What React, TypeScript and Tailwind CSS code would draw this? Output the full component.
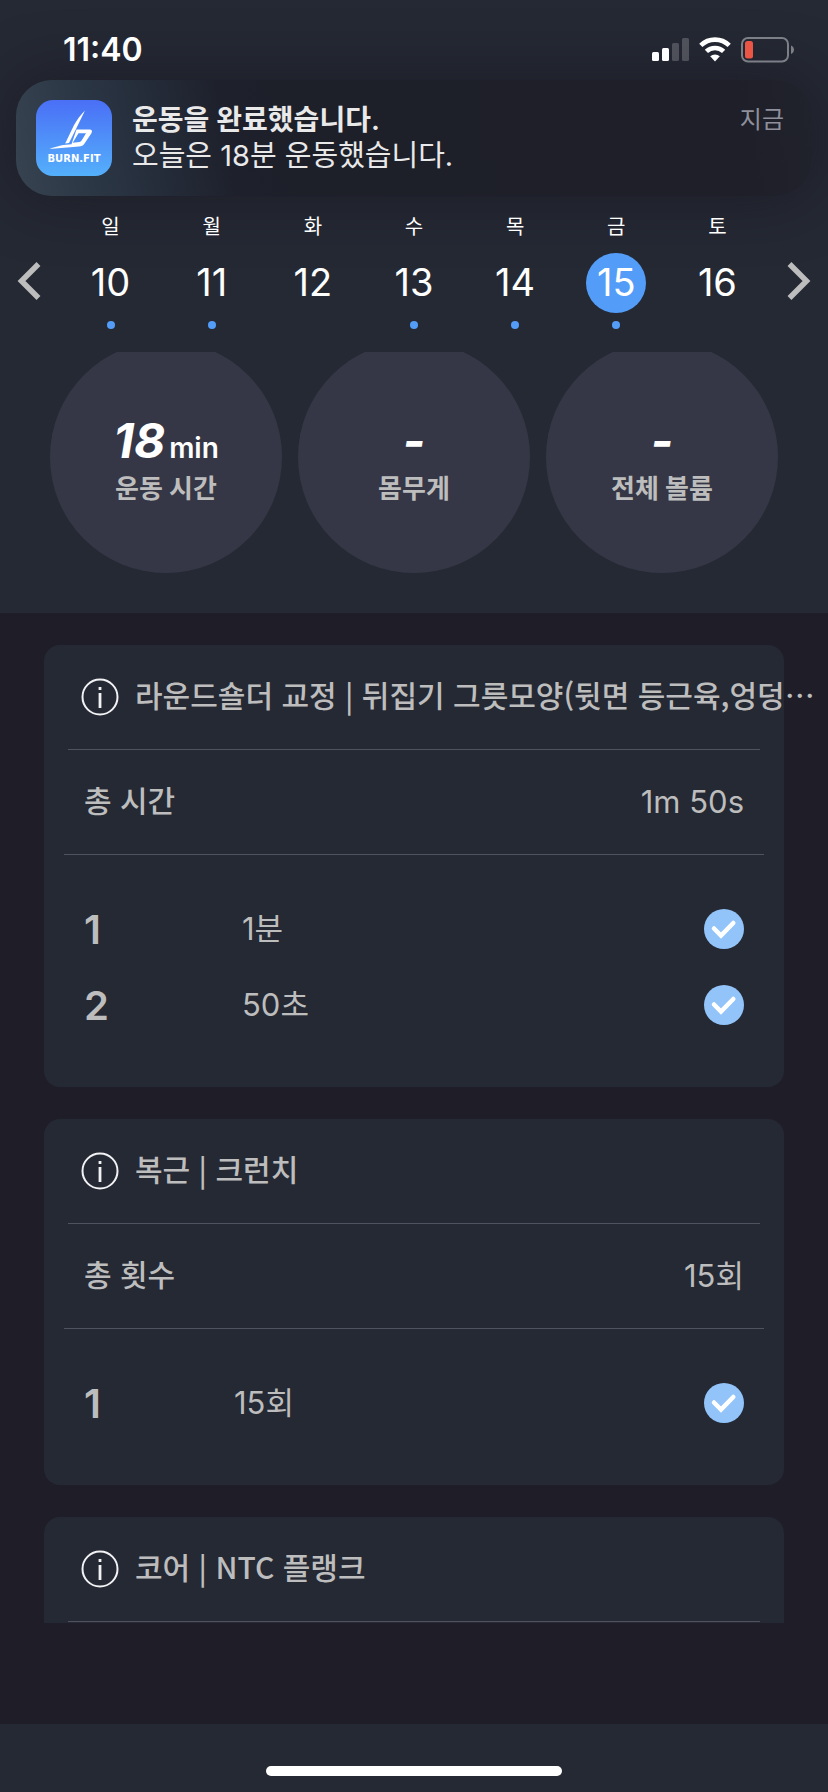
import { useState } from "react";
import clsx from "clsx";

const DAYS = [
  { label: "일", date: 10, logged: true },
  { label: "월", date: 11, logged: true },
  { label: "화", date: 12, logged: false },
  { label: "수", date: 13, logged: true },
  { label: "목", date: 14, logged: true },
  { label: "금", date: 15, logged: true },
  { label: "토", date: 16, logged: false },
];

const STATS = [
  { value: "18", unit: "min", label: "운동 시간" },
  { value: "-", unit: "", label: "몸무게" },
  { value: "-", unit: "", label: "전체 볼륨" },
];

type Exercise = {
  title: string;
  timed?: boolean;
  totalLabel: string;
  total: string;
  sets: string[];
};

const EXERCISES: Exercise[] = [
  {
    title: "라운드숄더 교정 | 뒤집기 그릇모양(뒷면 등근육,엉덩⋯",
    timed: true,
    totalLabel: "총 시간",
    total: "1m 50s",
    sets: ["1분", "50초"],
  },
  {
    title: "복근 | 크런치",
    totalLabel: "총 횟수",
    total: "15회",
    sets: ["15회"],
  },
  {
    title: "코어 | NTC 플랭크",
    totalLabel: "",
    total: "",
    sets: [],
  },
];

function StatusBar() {
  return (
    <div className="relative z-10 flex h-20 items-center justify-between pt-5 pr-[34px] pl-[63px]">
      <div className="text-[32px] leading-10 font-semibold">11:40</div>
      <div className="flex items-center gap-[10px]">
        <svg className="h-[26px] w-[37px]" viewBox="0 0 37 26" fill="#fff">
          <rect x="0" y="15" width="7" height="9" rx="1.5" />
          <rect x="10" y="11" width="7" height="13" rx="1.5" />
          <rect x="20" y="6" width="7" height="18" rx="1.5" opacity="0.2" />
          <rect x="30" y="1" width="7" height="23" rx="1.5" opacity="0.2" />
        </svg>
        <svg className="h-[26px] w-8" viewBox="0 0 32 26">
          <g fill="none" stroke="#fff" strokeWidth="4.6">
            <path d="M1.8 8.4a20.3 20.3 0 0 1 28.4 0" />
            <path d="M7.4 14.4a12.4 12.4 0 0 1 17.2 0" />
          </g>
          <path fill="#fff" d="M16 24.5l-4.8-5.2a7.2 7.2 0 0 1 9.6 0z" />
        </svg>
        <svg className="h-[26px] w-[53px]" viewBox="0 0 53 26">
          <rect
            x="1"
            y="1"
            width="46"
            height="23.5"
            rx="6"
            fill="none"
            stroke="#7d7f87"
            strokeWidth="2"
          />
          <path d="M50 8.5c4 1.5 4 7 0 8.5z" fill="#7d7f87" />
          <rect x="4" y="4" width="8" height="17.5" rx="2.5" fill="#eb5545" />
        </svg>
      </div>
    </div>
  );
}

function AppIcon() {
  return (
    <svg className="size-[76px] shrink-0" viewBox="0 0 76 76">
      <defs>
        <linearGradient id="app-bg" x1="0" y1="0" x2="0" y2="1">
          <stop offset="0" stopColor="#4a6ff6" />
          <stop offset="1" stopColor="#54b0fb" />
        </linearGradient>
      </defs>
      <rect width="76" height="76" rx="17" fill="url(#app-bg)" />
      <path
        fill="#fff"
        d="M49 10.5L39.5 30L33 43L29.2 43.5L37.8 25.5C41 19.5 45 14.5 49 10.5Z"
      />
      <path
        fill="#fff"
        fillRule="evenodd"
        d="M40.5 29.5H53C56 29.5 56.7 31 55.3 33.5L48.5 43.5C47 45.8 45.5 46.3 43 46.5L13.5 49C22 45.8 28 44.8 35.5 44.3ZM42.5 33.3L36.7 42.8L43.5 42C44.5 41.9 45 41.5 45.6 40.6L50 33.3Z"
      />
      <text
        x="38"
        y="62"
        textAnchor="middle"
        fill="#fff"
        fontSize="10"
        fontWeight="700"
        fontFamily="DejaVu Sans, sans-serif"
      >
        BURN.FIT
      </text>
    </svg>
  );
}

function Notification() {
  return (
    <div
      role="status"
      className="mx-4 flex h-[116px] items-center rounded-[36px] bg-[linear-gradient(80deg,#384352_0%,#2a3544_11%,#1e212c_27%,#1d1f29_34%,#1e1f29_90%,#20222c_100%)] pr-7 pl-5 shadow-[0_0_60px_rgba(22,18,28,0.6)]"
    >
      <AppIcon />
      <div className="ml-5 flex-1 text-[#e9e9ea]">
        <div className="text-[28px] leading-9 font-semibold">
          운동을 완료했습니다.
        </div>
        <div className="text-[29px] leading-9">오늘은 18분 운동했습니다.</div>
      </div>
      <div className="mt-[22px] self-start text-2xl leading-9 text-[#8f909b]">
        지금
      </div>
    </div>
  );
}

function Chevron({ flip }: { flip?: boolean }) {
  return (
    <button
      aria-label={flip ? "다음 주" : "이전 주"}
      className="flex h-24 w-[58px] shrink-0 items-center justify-center self-end"
    >
      <svg
        className={clsx("h-[38px] w-6", flip && "rotate-180")}
        viewBox="0 0 24 38"
        fill="none"
        stroke="#bdbdbd"
        strokeWidth="5.5"
      >
        <path d="M21.5 2L4.5 19L21.5 36" />
      </svg>
    </button>
  );
}

function WeekPicker() {
  const [selected, setSelected] = useState(15);

  return (
    <div className="flex pt-[19px] pb-[23px]">
      <Chevron />
      <div className="grid flex-1 grid-cols-7 px-[2px]">
        {DAYS.map((day) => (
          <button
            key={day.date}
            onClick={() => setSelected(day.date)}
            className="flex flex-col items-center"
          >
            <span className="text-xl leading-6">{day.label}</span>
            <span
              className={clsx(
                "mt-[14px] flex size-[60px] items-center justify-center rounded-full pb-[2px] text-[38px] leading-none",
                day.date === selected && "bg-[#539df9]"
              )}
            >
              {day.date}
            </span>
            <span
              className={clsx(
                "mt-2 size-2 rounded-full",
                day.logged && "bg-[#539df9]"
              )}
            />
          </button>
        ))}
      </div>
      <Chevron flip />
    </div>
  );
}

function Stats() {
  return (
    <div className="overflow-hidden px-[50px] pb-10">
      <div className="-mt-[11px] grid grid-cols-3 gap-4">
        {STATS.map((stat) => (
          <div
            key={stat.label}
            className="flex aspect-square flex-col items-center justify-center rounded-full bg-[#353746] pt-1"
          >
            <div className="flex h-[60px] items-baseline gap-1">
              <span className="text-5xl leading-[60px] font-bold italic">
                {stat.value}
              </span>
              {stat.unit && (
                <span className="text-[28px] leading-none font-semibold">
                  {stat.unit}
                </span>
              )}
            </div>
            <div className="text-[26px] leading-9 font-bold text-[#bdbdbd]">
              {stat.label}
            </div>
          </div>
        ))}
      </div>
    </div>
  );
}

function SetCheck({ label }: { label: string }) {
  return (
    <label className="ml-auto grid size-10 place-items-center">
      <input
        type="checkbox"
        defaultChecked
        aria-label={label}
        className="peer col-start-1 row-start-1 size-10 appearance-none rounded-full bg-[#353746] checked:bg-[#92c4fa]"
      />
      <svg
        className="pointer-events-none col-start-1 row-start-1 size-10 opacity-0 peer-checked:opacity-100"
        viewBox="0 0 40 40"
        fill="none"
        stroke="#fff"
        strokeWidth="4.5"
        strokeLinecap="round"
      >
        <path d="M10 19.5L17 26.5L29.3 14" />
      </svg>
    </label>
  );
}

function ExerciseCard({ exercise }: { exercise: Exercise }) {
  return (
    <section className="rounded-2xl bg-[#252934] pb-11 text-[31px] leading-9 text-[#bdbdbd]">
      <div className="mx-6 flex h-[105px] items-center border-b border-[#51525f] pl-[13px]">
        <button aria-label="운동 정보" className="shrink-0">
          <svg
            className="size-[38px]"
            viewBox="0 0 38 38"
            fill="none"
            stroke="#f2f2f4"
          >
            <circle cx="19" cy="19" r="17.5" strokeWidth="2" />
            <path d="M19 9v3M19 15v15" strokeWidth="2.8" />
          </svg>
        </button>
        <h2 className="ml-4 pb-[6px] font-['Noto_Sans_CJK_KR',sans-serif] text-[30px] font-medium whitespace-nowrap">
          {exercise.title}
        </h2>
      </div>
      <div className="mx-5 flex h-[105px] items-center justify-between border-b border-[#51525f] px-5">
        <span className="pb-[6px] font-['Noto_Sans_CJK_KR',sans-serif] text-[30px] font-medium">
          {exercise.totalLabel}
        </span>
        <span>{exercise.total}</span>
      </div>
      <ol className="pt-9">
        {exercise.sets.map((set, i) => (
          <li key={i} className="flex h-[76px] items-center px-10">
            <span
              className={clsx(
                "pt-[2px] text-[40px] font-semibold",
                exercise.timed ? "w-[158px]" : "w-[150px]"
              )}
            >
              {i + 1}
            </span>
            <span>{set}</span>
            <SetCheck label={`${i + 1}세트 완료`} />
          </li>
        ))}
      </ol>
    </section>
  );
}

export default function App() {
  return (
    <div
      lang="ko"
      className="flex h-screen flex-col bg-[#1f1d28] font-['Inter','Noto_Sans_CJK_KR',sans-serif] text-white"
    >
      <header className="shrink-0 overflow-hidden bg-[#252934]">
        <StatusBar />
        <Notification />
        <WeekPicker />
        <Stats />
      </header>
      <main className="mb-[101px] flex min-h-0 flex-1 flex-col gap-8 overflow-hidden px-11 pt-8">
        {EXERCISES.map((exercise) => (
          <div key={exercise.title} className="shrink-0">
            <ExerciseCard exercise={exercise} />
          </div>
        ))}
      </main>
      <footer className="flex h-[68px] shrink-0 items-end justify-center bg-[#252934] pb-4">
        <div className="h-[10px] w-[296px] rounded-full bg-white" />
      </footer>
    </div>
  );
}
